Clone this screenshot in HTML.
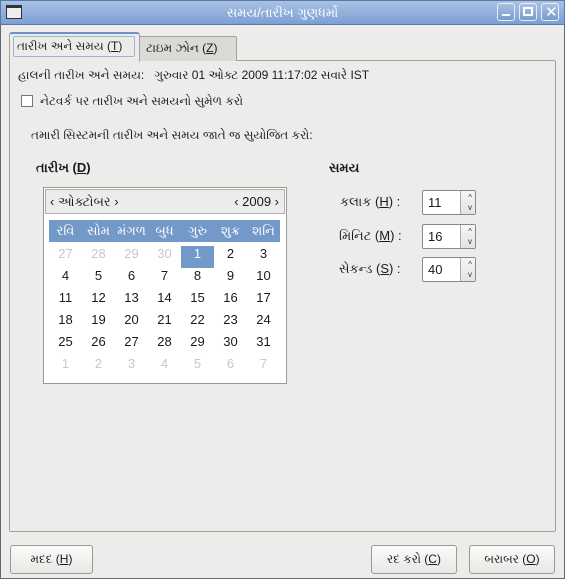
<!DOCTYPE html>
<html><head><meta charset="utf-8"><style>
*{box-sizing:border-box;margin:0;padding:0}
body{width:565px;height:579px;background:#edeceb;font-family:"Liberation Sans","DejaVu Sans",sans-serif;font-size:12px;color:#1a1a1a;position:relative;overflow:hidden}
.a{position:absolute;white-space:nowrap}
.win{position:absolute;left:0;top:0;width:565px;height:579px;border:1px solid #5d6a7a;border-top:none}
.title{position:absolute;left:0;top:0;width:565px;height:25px;background:linear-gradient(#a9c2e4,#7c9fd3);border:1px solid #5a78a8;color:#fff;font-size:13px;text-align:center;line-height:24px}
.tb{position:absolute;top:3px;width:18px;height:18px;border:1px solid #e8eef8;border-radius:3px;background:linear-gradient(#a8c0e2,#7a9bd0)}
.btn{position:absolute;height:29px;border:1px solid #9a9996;border-radius:3px;background:linear-gradient(#fbfbfa,#e8e7e5);text-align:center;line-height:27px}
u{text-decoration:underline}
.cal td{width:33px;height:22px;text-align:center;font-size:13px}
.g{color:#c8c8c8}
.spin{position:absolute;left:422px;width:54px;height:25px;border:1px solid #8a8986;border-radius:2px;background:#fff;font-size:13px;line-height:23px;padding-left:5px}
.spin:after{content:"";position:absolute;right:0;top:0;width:14px;height:23px;border-left:1px solid #aaa;background:linear-gradient(#f6f6f5,#e4e3e1)}
.spin i{position:absolute;right:3px;font-style:normal;font-size:8px;z-index:2;color:#333;line-height:8px}
</style></head><body>
<div class="win"></div>
<div class="title">સમય/તારીખ ગુણધર્મો</div>
<div class="a" style="left:6px;top:5px;width:16px;height:14px;border:1px solid #333;background:#eee;border-top:3px solid #333"></div>
<div class="tb" style="left:497px"></div><div class="tb" style="left:519px"></div><div class="tb" style="left:541px"></div>
<div class="a" style="left:502px;top:14px;width:8px;height:2px;background:#fff"></div>
<div class="a" style="left:523px;top:7px;width:10px;height:9px;border:2px solid #fff"></div>
<div class="a" style="left:545px;top:3px;color:#fff;font-size:15px;font-weight:bold">✕</div>

<div class="a" style="left:9px;top:60px;width:547px;height:472px;border:1px solid #a4a3a0;border-radius:2px;background:#edeceb"></div>
<div class="a" style="left:139px;top:36px;width:98px;height:25px;border:1px solid #a4a3a0;border-bottom:none;background:#dcdad7;border-radius:2px 2px 0 0;line-height:22px;padding-left:6px">ટાઇમ ઝોન (<u>Z</u>)</div>
<div class="a" style="left:9px;top:32px;width:131px;height:30px;border:1px solid #a4a3a0;border-bottom:none;border-top:2px solid #6c92cc;background:#edeceb;border-radius:3px 3px 0 0"></div>
<div class="a" style="left:13px;top:36px;width:122px;height:21px;border:1px solid #9bb4d8;border-radius:2px;line-height:19px;padding-left:3px">તારીખ અને સમય (<u>T</u>)</div>

<div class="a" style="left:18px;top:68px">હાલની તારીખ અને સમય:&nbsp;&nbsp; ગુરુવાર 01 ઓક્ટ 2009 11:17:02 સવારે IST</div>
<div class="a" style="left:21px;top:95px;width:12px;height:12px;border:1px solid #777;background:#fff"></div>
<div class="a" style="left:40px;top:94px">નેટવર્ક પર તારીખ અને સમયનો સુમેળ કરો</div>
<div class="a" style="left:31px;top:128px">તમારી સિસ્ટમની તારીખ અને સમય જાતે જ સુયોજિત કરો:</div>
<div class="a" style="left:36px;top:160px;font-weight:bold;font-size:13px">તારીખ (<u>D</u>)</div>
<div class="a" style="left:329px;top:160px;font-weight:bold;font-size:13px">સમય</div>

<div class="a" style="left:43px;top:187px;width:244px;height:197px;border:1px solid #9a9996;background:#fff"></div>
<div class="a" style="left:45px;top:189px;width:240px;height:25px;border:1px solid #b0afac;background:#edeceb;line-height:23px;font-size:13px"><span style="margin-left:4px">‹ ઓક્ટોબર ›</span><span style="position:absolute;right:5px">‹ 2009 ›</span></div>
<div class="a" style="left:49px;top:220px;width:231px;height:22px;background:#7399c9"></div>
<div class="a" style="left:181px;top:246px;width:33px;height:22px;background:#7399c9"></div>
<table class="cal a" style="left:49px;top:220px;border-collapse:collapse">
<tr style="color:#fff"><td>રવિ</td><td>સોમ</td><td>મંગળ</td><td>બુધ</td><td>ગુરુ</td><td>શુક્ર</td><td>શનિ</td></tr>
<tr><td class="g">27</td><td class="g">28</td><td class="g">29</td><td class="g">30</td><td style="color:#fff">1</td><td>2</td><td>3</td></tr>
<tr><td>4</td><td>5</td><td>6</td><td>7</td><td>8</td><td>9</td><td>10</td></tr>
<tr><td>11</td><td>12</td><td>13</td><td>14</td><td>15</td><td>16</td><td>17</td></tr>
<tr><td>18</td><td>19</td><td>20</td><td>21</td><td>22</td><td>23</td><td>24</td></tr>
<tr><td>25</td><td>26</td><td>27</td><td>28</td><td>29</td><td>30</td><td>31</td></tr>
<tr class="g"><td>1</td><td>2</td><td>3</td><td>4</td><td>5</td><td>6</td><td>7</td></tr>
</table>

<div class="a" style="left:340px;top:194px;font-size:13px">કલાક (<u>H</u>) :</div>
<div class="a" style="left:339px;top:228px;font-size:13px">મિનિટ (<u>M</u>) :</div>
<div class="a" style="left:339px;top:261px;font-size:13px">સેકન્ડ (<u>S</u>) :</div>
<div class="spin" style="top:190px">11<i style="top:3px">^</i><i style="top:13px">v</i></div>
<div class="spin" style="top:224px">16<i style="top:3px">^</i><i style="top:13px">v</i></div>
<div class="spin" style="top:257px">40<i style="top:3px">^</i><i style="top:13px">v</i></div>

<div class="btn" style="left:10px;top:545px;width:83px">મદદ (<u>H</u>)</div>
<div class="btn" style="left:371px;top:545px;width:86px">રદ કરો (<u>C</u>)</div>
<div class="btn" style="left:469px;top:545px;width:86px">બરાબર (<u>O</u>)</div>
</body></html>
